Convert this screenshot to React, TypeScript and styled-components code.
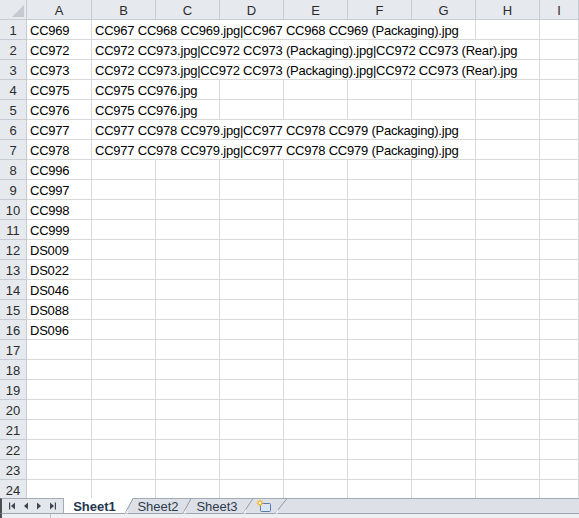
import React, { FC } from "react";
import styled, { createGlobalStyle } from "styled-components";

const GlobalStyle = createGlobalStyle`
  html, body {
    margin: 0;
    padding: 0;
    background: #ffffff;
  }
  body {
    font-family: "Liberation Sans", Arial, sans-serif;
  }
`;

const COLUMNS = ["A", "B", "C", "D", "E", "F", "G", "H", "I"];
const GRID = "27px 65px repeat(7, 64px) 1fr";

type RowData = { a: string; b?: string; span?: number };

const rows: RowData[] = [
  { a: "CC969", b: "CC967 CC968 CC969.jpg|CC967 CC968 CC969 (Packaging).jpg", span: 6 },
  { a: "CC972", b: "CC972 CC973.jpg|CC972 CC973 (Packaging).jpg|CC972 CC973 (Rear).jpg", span: 7 },
  { a: "CC973", b: "CC972 CC973.jpg|CC972 CC973 (Packaging).jpg|CC972 CC973 (Rear).jpg", span: 7 },
  { a: "CC975", b: "CC975 CC976.jpg", span: 2 },
  { a: "CC976", b: "CC975 CC976.jpg", span: 2 },
  { a: "CC977", b: "CC977 CC978 CC979.jpg|CC977 CC978 CC979 (Packaging).jpg", span: 6 },
  { a: "CC978", b: "CC977 CC978 CC979.jpg|CC977 CC978 CC979 (Packaging).jpg", span: 6 },
  { a: "CC996" },
  { a: "CC997" },
  { a: "CC998" },
  { a: "CC999" },
  { a: "DS009" },
  { a: "DS022" },
  { a: "DS046" },
  { a: "DS088" },
  { a: "DS096" },
];

const TOTAL_ROWS = 24;

const StyledWindow = styled.div`
  width: 579px;
  height: 518px;
  overflow: hidden;
  display: flex;
  flex-direction: column;
  background: #fff;
`;

const StyledGrid = styled.div`
  height: 498px;
  overflow: hidden;
  flex-shrink: 0;
`;

const StyledRow = styled.div`
  display: grid;
  grid-template-columns: ${GRID};
  height: 20px;
`;

const StyledHeaderCell = styled.div`
  box-sizing: border-box;
  background: #e6e9ee;
  border-right: 1px solid #c7ccd3;
  border-bottom: 1px solid #c7ccd3;
  color: #2b2b2b;
  font-size: 13px;
  display: flex;
  align-items: center;
  justify-content: center;
  padding-top: 1px;
`;

const StyledCorner = styled(StyledHeaderCell)`
  position: relative;

  &::after {
    content: "";
    position: absolute;
    right: 2px;
    bottom: 2px;
    width: 12px;
    height: 12px;
    background: #c6cad0;
    clip-path: polygon(100% 0, 100% 100%, 0 100%);
  }
`;

const StyledRowNumber = styled(StyledHeaderCell)`
  padding-top: 2px;
`;

const StyledCell = styled.div<{ $span?: number }>`
  box-sizing: border-box;
  grid-column: span ${(p) => p.$span ?? 1};
  border-right: 1px solid #d9d9d9;
  border-bottom: 1px solid #d9d9d9;
  font-size: 13px;
  color: #000;
  white-space: nowrap;
  overflow: hidden;
  padding: 3px 0 0 3px;
  letter-spacing: -0.22px;
`;

const StyledTabBar = styled.div`
  height: 16px;
  box-sizing: border-box;
  background: #dde1e7;
  border-top: 1px solid #a3abb6;
  border-bottom: 1px solid #9ea5af;
  border-left: 2px solid #4a4d52;
  display: flex;
  align-items: stretch;
  flex-shrink: 0;
`;

const StyledNav = styled.div`
  width: 62px;
  box-sizing: border-box;
  border-right: 1px solid #a3abb6;
  display: flex;
  align-items: center;
  justify-content: space-around;
  padding: 0 3px;
  background: #e3e6eb;
`;

const StyledTabs = styled.div`
  display: flex;
  align-items: stretch;
  margin-top: -1px;
`;

const StyledTab = styled.div<{ $active?: boolean; $width: number }>`
  width: ${(p) => p.$width}px;
  display: flex;
  align-items: center;
  justify-content: center;
  font-size: 13px;
  font-weight: ${(p) => (p.$active ? 700 : 400)};
  color: ${(p) => (p.$active ? "#23364f" : "#2d3b4e")};
  background: ${(p) => (p.$active ? "#ffffff" : "transparent")};
  padding-top: 1px;
`;

const StyledSlash = styled.svg`
  display: block;
  height: 16px;
  flex-shrink: 0;
`;

const StyledNewTab = styled.div`
  width: 22px;
  display: flex;
  align-items: center;
  justify-content: center;
`;

const StyledStatus = styled.div`
  flex: 1;
  background: #eef0f3;
  border-left: 2px solid #4a4d52;
  display: flex;
`;

const StyledStatusPart = styled.div`
  width: 48px;
  border-right: 1px solid #c2c7cf;
`;

const NavArrow: FC<{ dir: "first" | "prev" | "next" | "last" }> = ({ dir }) => (
  <svg width="8" height="8" viewBox="0 0 8 8">
    {dir === "first" && (
      <>
        <rect x="1" y="0.5" width="1.2" height="7" fill="#3d4653" />
        <path d="M7 0.5 L3 4 L7 7.5 Z" fill="#3d4653" />
      </>
    )}
    {dir === "prev" && <path d="M6 0.5 L2 4 L6 7.5 Z" fill="#3d4653" />}
    {dir === "next" && <path d="M2 0.5 L6 4 L2 7.5 Z" fill="#3d4653" />}
    {dir === "last" && (
      <>
        <path d="M1 0.5 L5 4 L1 7.5 Z" fill="#3d4653" />
        <rect x="5.8" y="0.5" width="1.2" height="7" fill="#3d4653" />
      </>
    )}
  </svg>
);

// "/" separator between sheet tabs; fill paints the left (upper) part white for the active tab
const Slash: FC<{ width: number; activeLeft?: boolean }> = ({ width, activeLeft }) => (
  <StyledSlash width={width} viewBox={`0 0 ${width} 16`}>
    {activeLeft && <path d={`M0 0 L${width} 0 L0 16 Z`} fill="#ffffff" />}
    <path d={`M0 15.5 L${width} 0.5`} stroke="#8f98a5" strokeWidth="1" fill="none" />
    <path d={`M0 15.5 L3 11 L3 15.5 Z`} fill="#eef1f5" />
  </StyledSlash>
);

const NewSheetIcon: FC = () => (
  <svg width="16" height="14" viewBox="0 0 16 14">
    <rect x="4.5" y="4.5" width="10" height="8" rx="1" fill="#dbe6f4" stroke="#5a7aa6" />
    <circle cx="4" cy="4" r="2.4" fill="#f4b63a" />
    <path
      d="M4 0.2 V7.8 M0.2 4 H7.8 M1.3 1.3 L6.7 6.7 M6.7 1.3 L1.3 6.7"
      stroke="#f4b63a"
      strokeWidth="0.8"
    />
    <circle cx="4" cy="4" r="1.3" fill="#fff3c8" />
  </svg>
);

const App: FC = () => {
  const allRows: RowData[] = Array.from({ length: TOTAL_ROWS }, (_, i) => rows[i] ?? { a: "" });

  return (
    <>
      <GlobalStyle />
      <StyledWindow>
        <StyledGrid>
          <StyledRow>
            <StyledCorner />
            {COLUMNS.map((col) => (
              <StyledHeaderCell key={col}>{col}</StyledHeaderCell>
            ))}
          </StyledRow>
          {allRows.map((row, i) => {
            const span = row.b ? row.span ?? 1 : 1;
            const rest = Array.from({ length: 8 - span });
            return (
              <StyledRow key={i}>
                <StyledRowNumber>{i + 1}</StyledRowNumber>
                <StyledCell>{row.a}</StyledCell>
                <StyledCell $span={span}>{row.b}</StyledCell>
                {rest.map((_, j) => (
                  <StyledCell key={j} />
                ))}
              </StyledRow>
            );
          })}
        </StyledGrid>
        <StyledTabBar>
          <StyledNav>
            <NavArrow dir="first" />
            <NavArrow dir="prev" />
            <NavArrow dir="next" />
            <NavArrow dir="last" />
          </StyledNav>
          <StyledTabs>
            <StyledTab $active $width={61}>Sheet1</StyledTab>
            <Slash width={8} activeLeft />
            <StyledTab $width={50}>Sheet2</StyledTab>
            <Slash width={8} />
            <StyledTab $width={52}>Sheet3</StyledTab>
            <Slash width={10} />
            <StyledNewTab>
              <NewSheetIcon />
            </StyledNewTab>
            <Slash width={12} />
          </StyledTabs>
        </StyledTabBar>
        <StyledStatus>
          <StyledStatusPart />
        </StyledStatus>
      </StyledWindow>
    </>
  );
};

export default App;
